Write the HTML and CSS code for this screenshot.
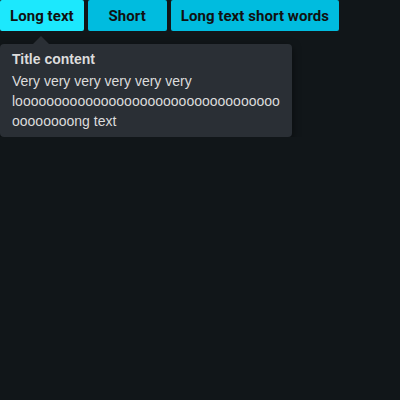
FILE: index.html
```html
<!DOCTYPE html>
<html>
<head>
<meta charset="utf-8">
<link rel="stylesheet" href="styles.css">
</head>
<body>
<div class="buttons">
  <button class="btn btn-active">Long text</button>
  <button class="btn btn-short">Short</button>
  <button class="btn">Long text short words</button>
</div>
<div class="tooltip">
  <div class="arrow"></div>
  <div class="tt-title">Title content</div>
  <div class="tt-body">Very very very very very very loooooooooooooooooooooooooooooooooooooooooong text</div>
</div>
</body>
</html>
```
FILE: styles.css
```css
html, body {
  margin: 0;
  background: #111619;
  font-family: "Liberation Sans", Arial, sans-serif;
}
.buttons {
  display: flex;
  gap: 4px;
}
.btn {
  height: 31px;
  padding: 0 10px;
  border: none;
  border-radius: 2px;
  background: #00bcdf;
  color: #111;
  font-family: Roboto, sans-serif;
  font-weight: 700;
  font-size: 15px;
  letter-spacing: 0.06px;
}
.btn-active {
  background: #1ce8fd;
}
.btn-short {
  min-width: 79px;
}
.tooltip {
  position: relative;
  margin-top: 13px;
  width: 268px;
  padding: 5px 12px 6px;
  background: #2a2f35;
  border-radius: 4px;
  box-shadow: 0 3px 8px rgba(0,0,0,0.5);
  color: #dcdcdc;
  font-size: 14px;
  line-height: 20px;
}
.arrow {
  position: absolute;
  top: -8px;
  left: 33px;
  width: 0;
  height: 0;
  border-left: 8px solid transparent;
  border-right: 8px solid transparent;
  border-bottom: 8px solid #2a2f35;
}
.tt-title {
  font-weight: 700;
  margin-bottom: 2px;
}
.tt-body {
  overflow-wrap: anywhere;
}
```
